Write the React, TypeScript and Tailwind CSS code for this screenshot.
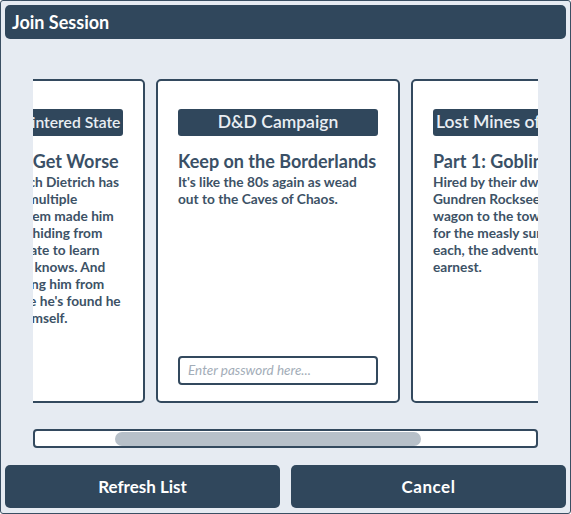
import React from "react";

type Session = {
  tag: string;
  tagClass: string;
  title: string;
  lines: string[];
  password?: boolean;
};

const sessions: Session[] = [
  {
    tag: "Cyberpunk's Wintered State",
    tagClass: "text-[15.7px] px-[1px]",
    title: "It Could Only Get Worse",
    lines: [
      "Dr. Johann Heinrich Dietrich has",
      "been traveling in multiple",
      "universes; his system made him",
      "fearful. He's been hiding from",
      "the Corporatist state to learn",
      "the secret only he knows. And",
      "now they're keeping him from",
      "the base, the place he's found he",
      "can't even trust himself.",
    ],
  },
  {
    tag: "D&D Campaign",
    tagClass: "text-[17.5px] px-[3px]",
    title: "Keep on the Borderlands",
    lines: ["It's like the 80s again as wead", "out to the Caves of Chaos."],
    password: true,
  },
  {
    tag: "Lost Mines of Phandelver",
    tagClass: "text-[17.5px] px-[3px]",
    title: "Part 1: Goblin Arrows",
    lines: [
      "Hired by their dwarven patron,",
      "Gundren Rockseeker, to bring a",
      "wagon to the town of Phandalin",
      "for the measly sum of 10gp",
      "each, the adventurers set out in",
      "earnest.",
    ],
  },
];

function SessionCard({ s }: { s: Session }) {
  return (
    <div className="w-[244px] h-[324px] shrink-0 bg-white border-2 border-[#33495e] rounded-[5px] px-[20px] pt-[28px] pb-[16px] flex flex-col">
      <div
        className={`h-[27px] bg-[#30475c] rounded-[3px] flex items-center justify-center-safe overflow-hidden whitespace-nowrap font-semibold text-[#e9eef3] ${s.tagClass}`}
      >
        {s.tag}
      </div>
      <div className="mt-[13px] whitespace-nowrap text-[18px] leading-[24px] font-bold text-[#3a5066]">
        {s.title}
      </div>
      <div className="text-[13.7px] leading-[17px] font-bold text-[#3d5266] whitespace-nowrap">
        {s.lines.map((l, i) => (
          <div key={i}>{l}</div>
        ))}
      </div>
      {s.password && (
        <div className="mt-auto h-[29px] border-2 border-[#33495e] rounded-[4px] flex items-center px-[8px]">
          <input
            placeholder="Enter password here..."
            className="w-full bg-transparent outline-none text-[13.5px] italic text-[#3d5266] placeholder:text-[#a3adb8]"
          />
        </div>
      )}
    </div>
  );
}

export default function App() {
  return (
    <div
      className="w-[571px] h-[514px] bg-[#e6ebf2] border border-[#3a4f63] rounded-[3px] p-[4px] pb-[5px] flex flex-col"
      style={{ fontFamily: "Lato, 'Open Sans', sans-serif" }}
    >
      <div className="h-[34px] shrink-0 bg-[#30475c] rounded-[5px] flex items-center px-[7px]">
        <span className="text-[18px] font-bold text-white">Join Session</span>
      </div>

      <div className="mx-[28px] mt-[40px] overflow-hidden">
        <div className="flex gap-[11px] -ml-[132px] w-max">
          {sessions.map((s, i) => (
            <SessionCard key={i} s={s} />
          ))}
        </div>
      </div>

      <div className="mx-[28px] mt-[26px] h-[19px] shrink-0 bg-white border-2 border-[#33495e] rounded-[4px] flex items-center">
        <div className="ml-[80px] w-[306px] h-[14px] bg-[#b7c0c9] rounded-full" />
      </div>

      <div className="mt-auto flex gap-[11px]">
        <button className="flex-1 h-[43px] bg-[#30475c] rounded-[5px] text-white font-bold text-[17px]">
          Refresh List
        </button>
        <button className="flex-1 h-[43px] bg-[#30475c] rounded-[5px] text-white font-bold text-[17px] tracking-[0.5px]">
          Cancel
        </button>
      </div>
    </div>
  );
}
